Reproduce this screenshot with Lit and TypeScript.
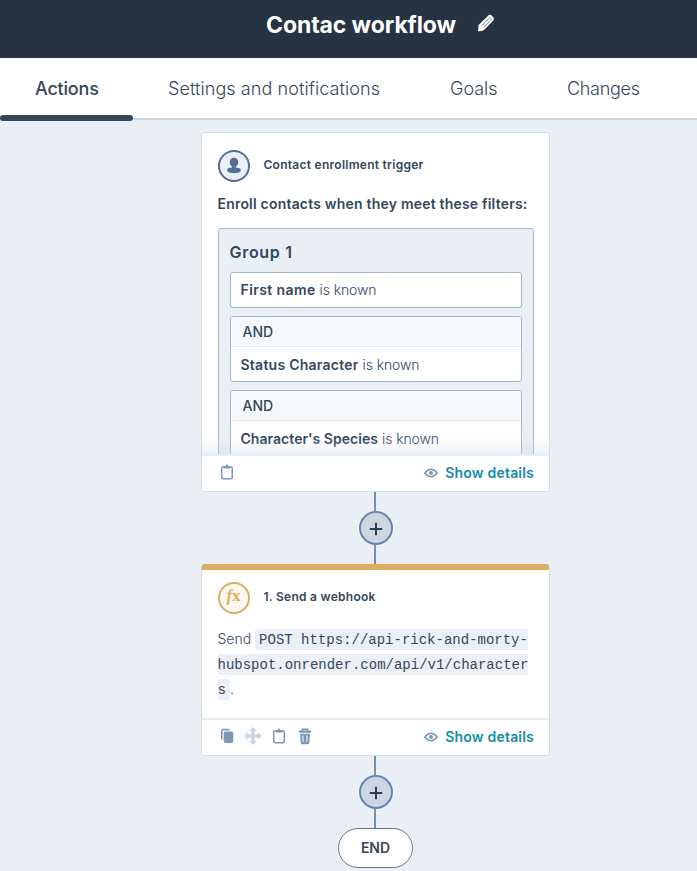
import { LitElement, html, css, svg } from "lit";
import { customElement, property } from "lit/decorators.js";

const icons: Record<string, { w: number; h: number; body: unknown }> = {
  pencil: {
    w: 18, h: 18,
    body: svg`<path fill="currentColor" d="M1 17.200l.6-6.200L10.800 1.900Q12.500.2 14.300 1.300l2.200 2.100q1.200 1.900-.6 3.700L7 15.900Q4.500 17.500 1 17.200z"/><path d="M4.800 11.600l6.800-6.700M6.700 13.400l6.800-6.700M11.600 3l3.800 3.700" stroke="#253342" stroke-width=".6" fill="none"/>`,
  },
  person: {
    w: 18, h: 18,
    body: svg`<path fill="currentColor" d="M9 .8c2.700 0 4.200 1.700 4.200 4.200 0 2.100-.9 3.800-2.300 4.600v1c1.900.4 4.900.300 4.900 2.700 0 2-3.200 2.900-6.800 2.900s-6.800-.9-6.800-2.900c0-2.400 3-2.300 4.900-2.700v-1C5.700 8.800 4.800 7.100 4.800 5 4.800 2.500 6.300.8 9 .8z"/>`,
  },
  clipboard: {
    w: 14, h: 16,
    body: svg`<rect x="1.700" y="2.700" width="10.600" height="12" rx="1.500" fill="none" stroke="currentColor" stroke-width="1.500"/><path fill="currentColor" d="M3.800 1.900h1.700Q7-.8 8.500 1.900h1.700v2.500H3.800z"/>`,
  },
  copy: {
    w: 14, h: 16,
    body: svg`<path d="M1.700 11.500V3Q1.700 1.700 3 1.700h6.500" fill="none" stroke="currentColor" stroke-width="1.700"/><rect x="3.700" y="3.600" width="9.500" height="11.400" rx="1.700" fill="currentColor"/>`,
  },
  move: {
    w: 18, h: 18,
    body: svg`<path fill="currentColor" stroke="currentColor" stroke-width=".5" stroke-linejoin="round" d="M9 .3l3.400 3.500h-2v3.800h3.800v-2L17.700 9l-3.500 3.400v-2h-3.800v3.800h2L9 17.700l-3.400-3.500h2v-3.800H3.800v2L.3 9l3.500-3.400v2h3.800V3.800h-2z"/>`,
  },
  trash: {
    w: 14, h: 17,
    body: svg`<path fill="none" stroke="currentColor" stroke-width="1.600" d="M4.500 3V1.200h5V3"/><rect x=".8" y="2.500" width="12.400" height="2.300" rx=".7" fill="currentColor"/><path fill="currentColor" fill-rule="evenodd" d="M2 5.700h10l-.7 9q-.1 1.500-1.500 1.500H4.200q-1.400 0-1.500-1.500zM4.400 7.400l.3 6.600h.9l-.2-6.600zm4.200 0l-.2 6.600h.9l.3-6.600z"/>`,
  },
  eye: {
    w: 14, h: 10,
    body: svg`<path d="M.8 5Q7-2.600 13.200 5 7 12.600.8 5z" fill="none" stroke="currentColor" stroke-width="1.500"/><circle cx="7" cy="5" r="2.100" fill="currentColor"/>`,
  },
  plus: {
    w: 14, h: 14,
    body: svg`<path d="M7 .8v12.400M.8 7h12.400" stroke="currentColor" stroke-width="2"/>`,
  },
};

@customElement("ui-icon")
export class UiIcon extends LitElement {
  @property() name = "";
  static styles = css`
    :host { display: block; flex: none; line-height: 0; }
    svg { display: block; }
  `;
  render() {
    const i = icons[this.name];
    return html`<svg width=${i.w} height=${i.h} viewBox="0 0 ${i.w} ${i.h}">${i.body}</svg>`;
  }
}

@customElement("add-step")
export class AddStep extends LitElement {
  static styles = css`
    :host { display: flex; flex-direction: column; align-items: center; width: 34px; }
    .line { width: 2px; height: 19px; background: #7490b0; margin-right: 1px; }
    .knob {
      box-sizing: border-box; width: 34px; height: 34px; border-radius: 50%;
      border: 2px solid #6a86a8; background: #cbd6e2; color: #2d3e50;
      display: grid; place-items: center; padding: 1px 0 0;
    }
  `;
  render() {
    return html`<div class="line"></div>
      <div class="knob"><ui-icon name="plus"></ui-icon></div>
      <div class="line"></div>`;
  }
}

@customElement("card-footer")
export class CardFooter extends LitElement {
  @property({ type: Array }) actions: string[] = [];
  static styles = css`
    :host {
      box-sizing: border-box; display: flex; align-items: center; height: 37px;
      border-top: 2px solid #e6edf4; padding: 0 15px 1px 16px; background: #fff; color: #7c98b6;
    }
    .slot { width: 18px; margin-right: 8px; display: grid; place-items: center; padding-bottom: 2px; }
    .move { color: #cbd6e2; }
    .details { margin-left: auto; display: flex; align-items: center; gap: 7px; }
    .label { font: 600 14px/20px Inter, sans-serif; color: #118da8; letter-spacing: 0.2px; }
  `;
  render() {
    return html`${this.actions.map(
        (a) => html`<div class="slot ${a}"><ui-icon name=${a}></ui-icon></div>`
      )}
      <div class="details">
        <ui-icon name="eye"></ui-icon><span class="label">Show details</span>
      </div>`;
  }
}

const tabs = [
  { id: "actions", label: "Actions" },
  { id: "settings", label: "Settings and notifications" },
  { id: "goals", label: "Goals" },
  { id: "changes", label: "Changes" },
];
const filters = [
  { id: "first-name", name: "First name", joined: false },
  { id: "status", name: "Status Character", joined: true },
  { id: "species", name: "Character's Species", joined: true },
];

@customElement("app-root")
export class AppRoot extends LitElement {
  static styles = css`
    :host {
      display: flex; flex-direction: column; height: 871px; overflow: hidden;
      background: #eaeff6; color: #33475b; font-family: Inter, sans-serif; font-size: 14px;
    }
    header {
      height: 58px; flex: none; background: #253342; color: #fff; display: flex;
      padding-left: 266px; box-sizing: border-box;
    }
    h1 { margin: 0; width: 211px; font-size: 23px; line-height: 51px; font-weight: 700; letter-spacing: -0.1px; white-space: nowrap; }
    header ui-icon { margin-top: 14px; }
    nav {
      box-sizing: border-box; height: 62px; flex: none; background: #fff;
      border-bottom: 2px solid #cbd6e2; display: flex; padding-left: 35px;
      font-size: 18px; line-height: 62px; font-weight: 300; white-space: nowrap;
    }
    .tab.actions { width: 133px; font-weight: 500; letter-spacing: -0.2px; position: relative; }
    .tab.actions::after {
      content: ""; position: absolute; left: -35px; top: 57px; width: 133px; height: 6px;
      border-radius: 3px; background: #33475b;
    }
    .tab.settings { width: 282px; letter-spacing: 0.08px; }
    .tab.goals { width: 117px; }
    .tab.changes { letter-spacing: -0.3px; }
    main { flex: 1; min-height: 0; display: flex; flex-direction: column; align-items: center; padding: 12px 0 0 54px; }
    .card {
      box-sizing: border-box; width: 349px; flex: none; background: #fff;
      border: 1px solid #d3dde8; border-radius: 3px; overflow: hidden;
    }
    .trigger { height: 360px; }
    .body { box-sizing: border-box; height: 321px; overflow: hidden; padding: 17px 16px 0 15.5px; position: relative; }
    .body::after {
      content: ""; position: absolute; left: 0; right: 0; bottom: 0; height: 16px;
      background: linear-gradient(rgba(203, 214, 226, 0), rgba(203, 214, 226, 0.35));
    }
    .head { display: flex; gap: 14px; }
    .badge {
      box-sizing: border-box; width: 32px; height: 32px; border-radius: 50%;
      border: 2px solid #516f90; background: #eaf0f6; color: #516f90; display: grid; place-items: center;
    }
    .badge.fx { border-color: #dbae60; background: #fef8f0; color: #dbae60; font: 700 17px/22px "Liberation Serif", serif; padding-bottom: 5px; }
    .head b { font-size: 12px; line-height: 30px; font-weight: 600; letter-spacing: 0.27px; white-space: nowrap; }
    .lead { margin: 10px 0 0; font-weight: 600; line-height: 24px; letter-spacing: 0.2px; white-space: nowrap; }
    .group {
      box-sizing: border-box; margin-top: 12px; width: 316px; height: 300px; padding: 12px 11px;
      border: 1px solid #a9bcd0; border-radius: 3px; background: #eaeff6;
    }
    h2 { margin: 0 0 9px; font-size: 16px; line-height: 22px; font-weight: 600; letter-spacing: 0.7px; }
    .filter { box-sizing: border-box; background: #fff; border: 1px solid #9fb5cb; border-radius: 3px; margin-bottom: 8px; overflow: hidden; white-space: nowrap; }
    .and { height: 29px; line-height: 30px; padding-left: 12px; background: #f5f8fa; border-bottom: 1px solid #dfe7f0; font-weight: 500; }
    .rule { height: 34px; line-height: 34px; padding-left: 10px; font-weight: 300; }
    .and + .rule { line-height: 36px; }
    .rule b { font-weight: 600; }
    .first-name { letter-spacing: 0.4px; }
    .status { letter-spacing: 0.25px; }
    .species { letter-spacing: 0.04px; }
    .known { letter-spacing: -0.1px; }
    .webhook { height: 192px; border-top: 0; }
    .stripe { height: 6px; background: #dbae60; }
    .webhook .body { height: 148px; padding-top: 12px; }
    .webhook .body::after { display: none; }
    .text { margin: 12px 0 0; line-height: 25px; font-weight: 300; }
    code {
      font: 14px/20px "Liberation Mono", monospace; background: #eaf0f6; border-radius: 3px;
      padding: 3px 4px 2px; word-break: break-all;
    }
    .end {
      box-sizing: border-box; width: 75px; height: 40px; border: 1px solid #5d7a9a; border-radius: 20px;
      background: #fff; font-weight: 600; line-height: 37px; text-align: center; flex: none;
    }
  `;

  render() {
    return html`
      <header><h1>Contac workflow</h1><ui-icon name="pencil"></ui-icon></header>
      <nav>${tabs.map((t) => html`<div class="tab ${t.id}"><span>${t.label}</span></div>`)}</nav>
      <main>
        <section class="card trigger">
          <div class="body">
            <div class="head">
              <div class="badge"><ui-icon name="person"></ui-icon></div>
              <b>Contact enrollment trigger</b>
            </div>
            <p class="lead">Enroll contacts when they meet these filters:</p>
            <div class="group">
              <h2>Group 1</h2>
              ${filters.map(
                (f) => html`<div class="filter">
                  ${f.joined ? html`<div class="and">AND</div>` : ""}
                  <div class="rule"><b class=${f.id}>${f.name}</b> <span class="known">is known</span></div>
                </div>`
              )}
            </div>
          </div>
          <card-footer .actions=${["clipboard"]}></card-footer>
        </section>
        <add-step></add-step>
        <section class="card webhook">
          <div class="stripe"></div>
          <div class="body">
            <div class="head">
              <div class="badge fx"><span><i>f</i>x</span></div>
              <b>1. Send a webhook</b>
            </div>
            <p class="text"><span class="send">Send</span> <code>POST https://api-rick-and-morty-hubspot.onrender.com/api/v1/characters</code>.</p>
          </div>
          <card-footer .actions=${["copy", "move", "clipboard", "trash"]}></card-footer>
        </section>
        <add-step></add-step>
        <div class="end">END</div>
      </main>
    `;
  }
}
